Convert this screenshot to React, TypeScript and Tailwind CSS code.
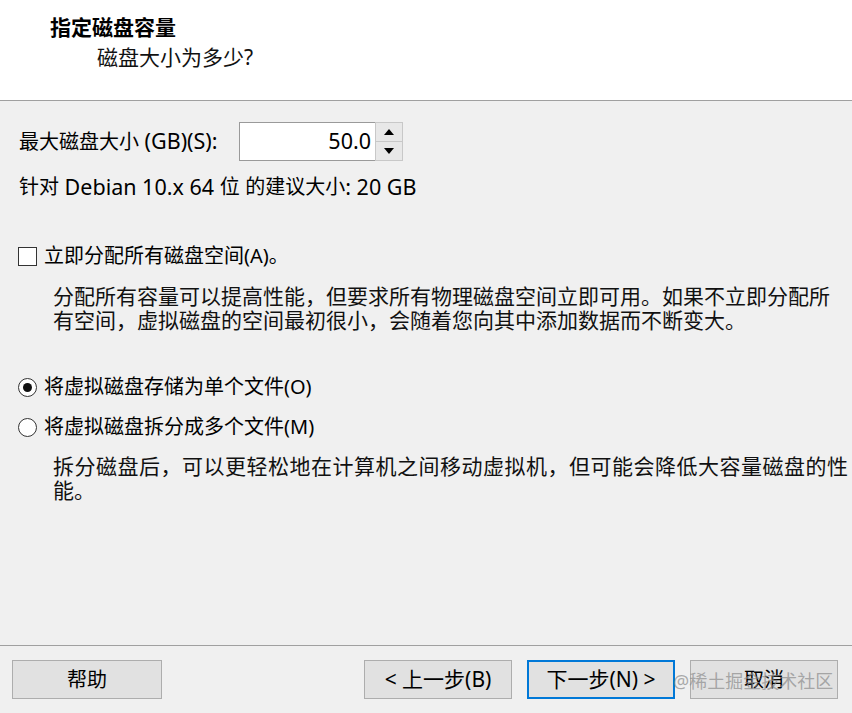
import React from "react";

const font = { fontFamily: '"Noto Sans", "Noto Sans CJK SC", sans-serif' };

function L({ children }: { children: React.ReactNode }) {
  return <span className="text-[21.5px]">{children}</span>;
}

function Btn({ children, primary = false, className = "" }: { children: React.ReactNode; primary?: boolean; className?: string }) {
  return (
    <div
      className={`h-[39px] w-[148px] flex items-center justify-center bg-[#e1e1e1] text-[20px] text-black ${
        primary ? "border-2 border-[#0078d7]" : "border border-[#adadad]"
      } ${className}`}
    >
      {children}
    </div>
  );
}

export default function App() {
  return (
    <div className="relative w-[852px] h-[713px] bg-[#f0f0f0] flex flex-col overflow-hidden text-black" style={font}>
      {/* Header */}
      <div className="h-[101px] bg-white border-b border-[#a0a0a0] shrink-0">
        <div className="pl-[50px] pt-[12px] text-[21px] leading-[30px] font-bold">指定磁盘容量</div>
        <div className="pl-[97px] text-[21px] leading-[30px] text-[#111]">磁盘大小为多少?</div>
      </div>

      {/* Body */}
      <div className="flex-1 flex flex-col px-[19px]">
        <div className="mt-[21px] h-[39px] flex items-center">
          <span className="text-[20px] leading-[28px] w-[220px] whitespace-nowrap">
            最大磁盘大小<L> (GB)(S):</L>
          </span>
          <div className="flex h-[39px]">
            <div className="w-[137px] h-[39px] bg-white border border-[#9a9a9a] flex items-center justify-end pr-[4px] text-[21.5px]">
              50.0
            </div>
            <div className="flex flex-col w-[28px] h-[39px] ml-[-1px] border border-[#c8c8c8] bg-[#f0f0f0]">
              <div className="flex-1 flex items-center justify-center border-b border-[#c8c8c8] bg-[#e8e8e8]">
                <svg width="10" height="6" viewBox="0 0 10 6"><path d="M5 0 L10 6 L0 6 Z" fill="#000" /></svg>
              </div>
              <div className="flex-1 flex items-center justify-center bg-[#e8e8e8]">
                <svg width="10" height="6" viewBox="0 0 10 6"><path d="M0 0 L10 0 L5 6 Z" fill="#000" /></svg>
              </div>
            </div>
          </div>
        </div>

        <div className="mt-[12px] h-[28px] flex items-center text-[20px] whitespace-pre">
          针对<L> Debian 10.x 64 </L>位<L> </L>的建议大小<L>: 20 GB</L>
        </div>

        <div className="mt-[41px] h-[28px] flex items-center text-[20px]">
          <span className="w-[19px] h-[19px] border border-[#333] bg-white mr-[7px] ml-[-1px]" />
          <span>立即分配所有磁盘空间(A)。</span>
        </div>

        <div className="mt-[14px] pl-[34px] text-[21px] leading-[24px] text-[#111] whitespace-nowrap">
          <div>分配所有容量可以提高性能，但要求所有物理磁盘空间立即可用。如果不立即分配所</div>
          <div>有空间，虚拟磁盘的空间最初很小，会随着您向其中添加数据而不断变大。</div>
        </div>

        <div className="mt-[41px] h-[28px] flex items-center text-[20px]">
          <span className="w-[19px] h-[19px] rounded-full border border-[#333] bg-white mr-[7px] ml-[-1px] flex items-center justify-center">
            <span className="w-[9px] h-[9px] rounded-full bg-[#111]" />
          </span>
          <span>将虚拟磁盘存储为单个文件(O)</span>
        </div>

        <div className="mt-[12px] h-[28px] flex items-center text-[20px]">
          <span className="w-[19px] h-[19px] rounded-full border border-[#333] bg-white mr-[7px] ml-[-1px]" />
          <span>将虚拟磁盘拆分成多个文件(M)</span>
        </div>

        <div className="mt-[13px] pl-[34px] text-[21px] leading-[24px] text-[#111] whitespace-nowrap">
          <div className="tracking-[0.5px]">拆分磁盘后，可以更轻松地在计算机之间移动虚拟机，但可能会降低大容量磁盘的性</div>
          <div>能。</div>
        </div>
      </div>

      {/* Footer */}
      <div className="h-[68px] shrink-0 border-t border-[#a0a0a0] pt-[14px] flex">
        <Btn className="ml-[12px] w-[150px]">帮助</Btn>
        <Btn className="ml-[202px] text-[21px]">&lt; 上一步(B)</Btn>
        <Btn primary className="ml-[15px] text-[21px]">下一步(N) &gt;</Btn>
        <Btn className="ml-[15px]">取消</Btn>
      </div>

      <div className="absolute left-[673px] top-[667px] text-[18px] leading-[28px] text-[#8a8a8a]/70 whitespace-nowrap">
        @稀土掘金技术社区
      </div>
    </div>
  );
}
